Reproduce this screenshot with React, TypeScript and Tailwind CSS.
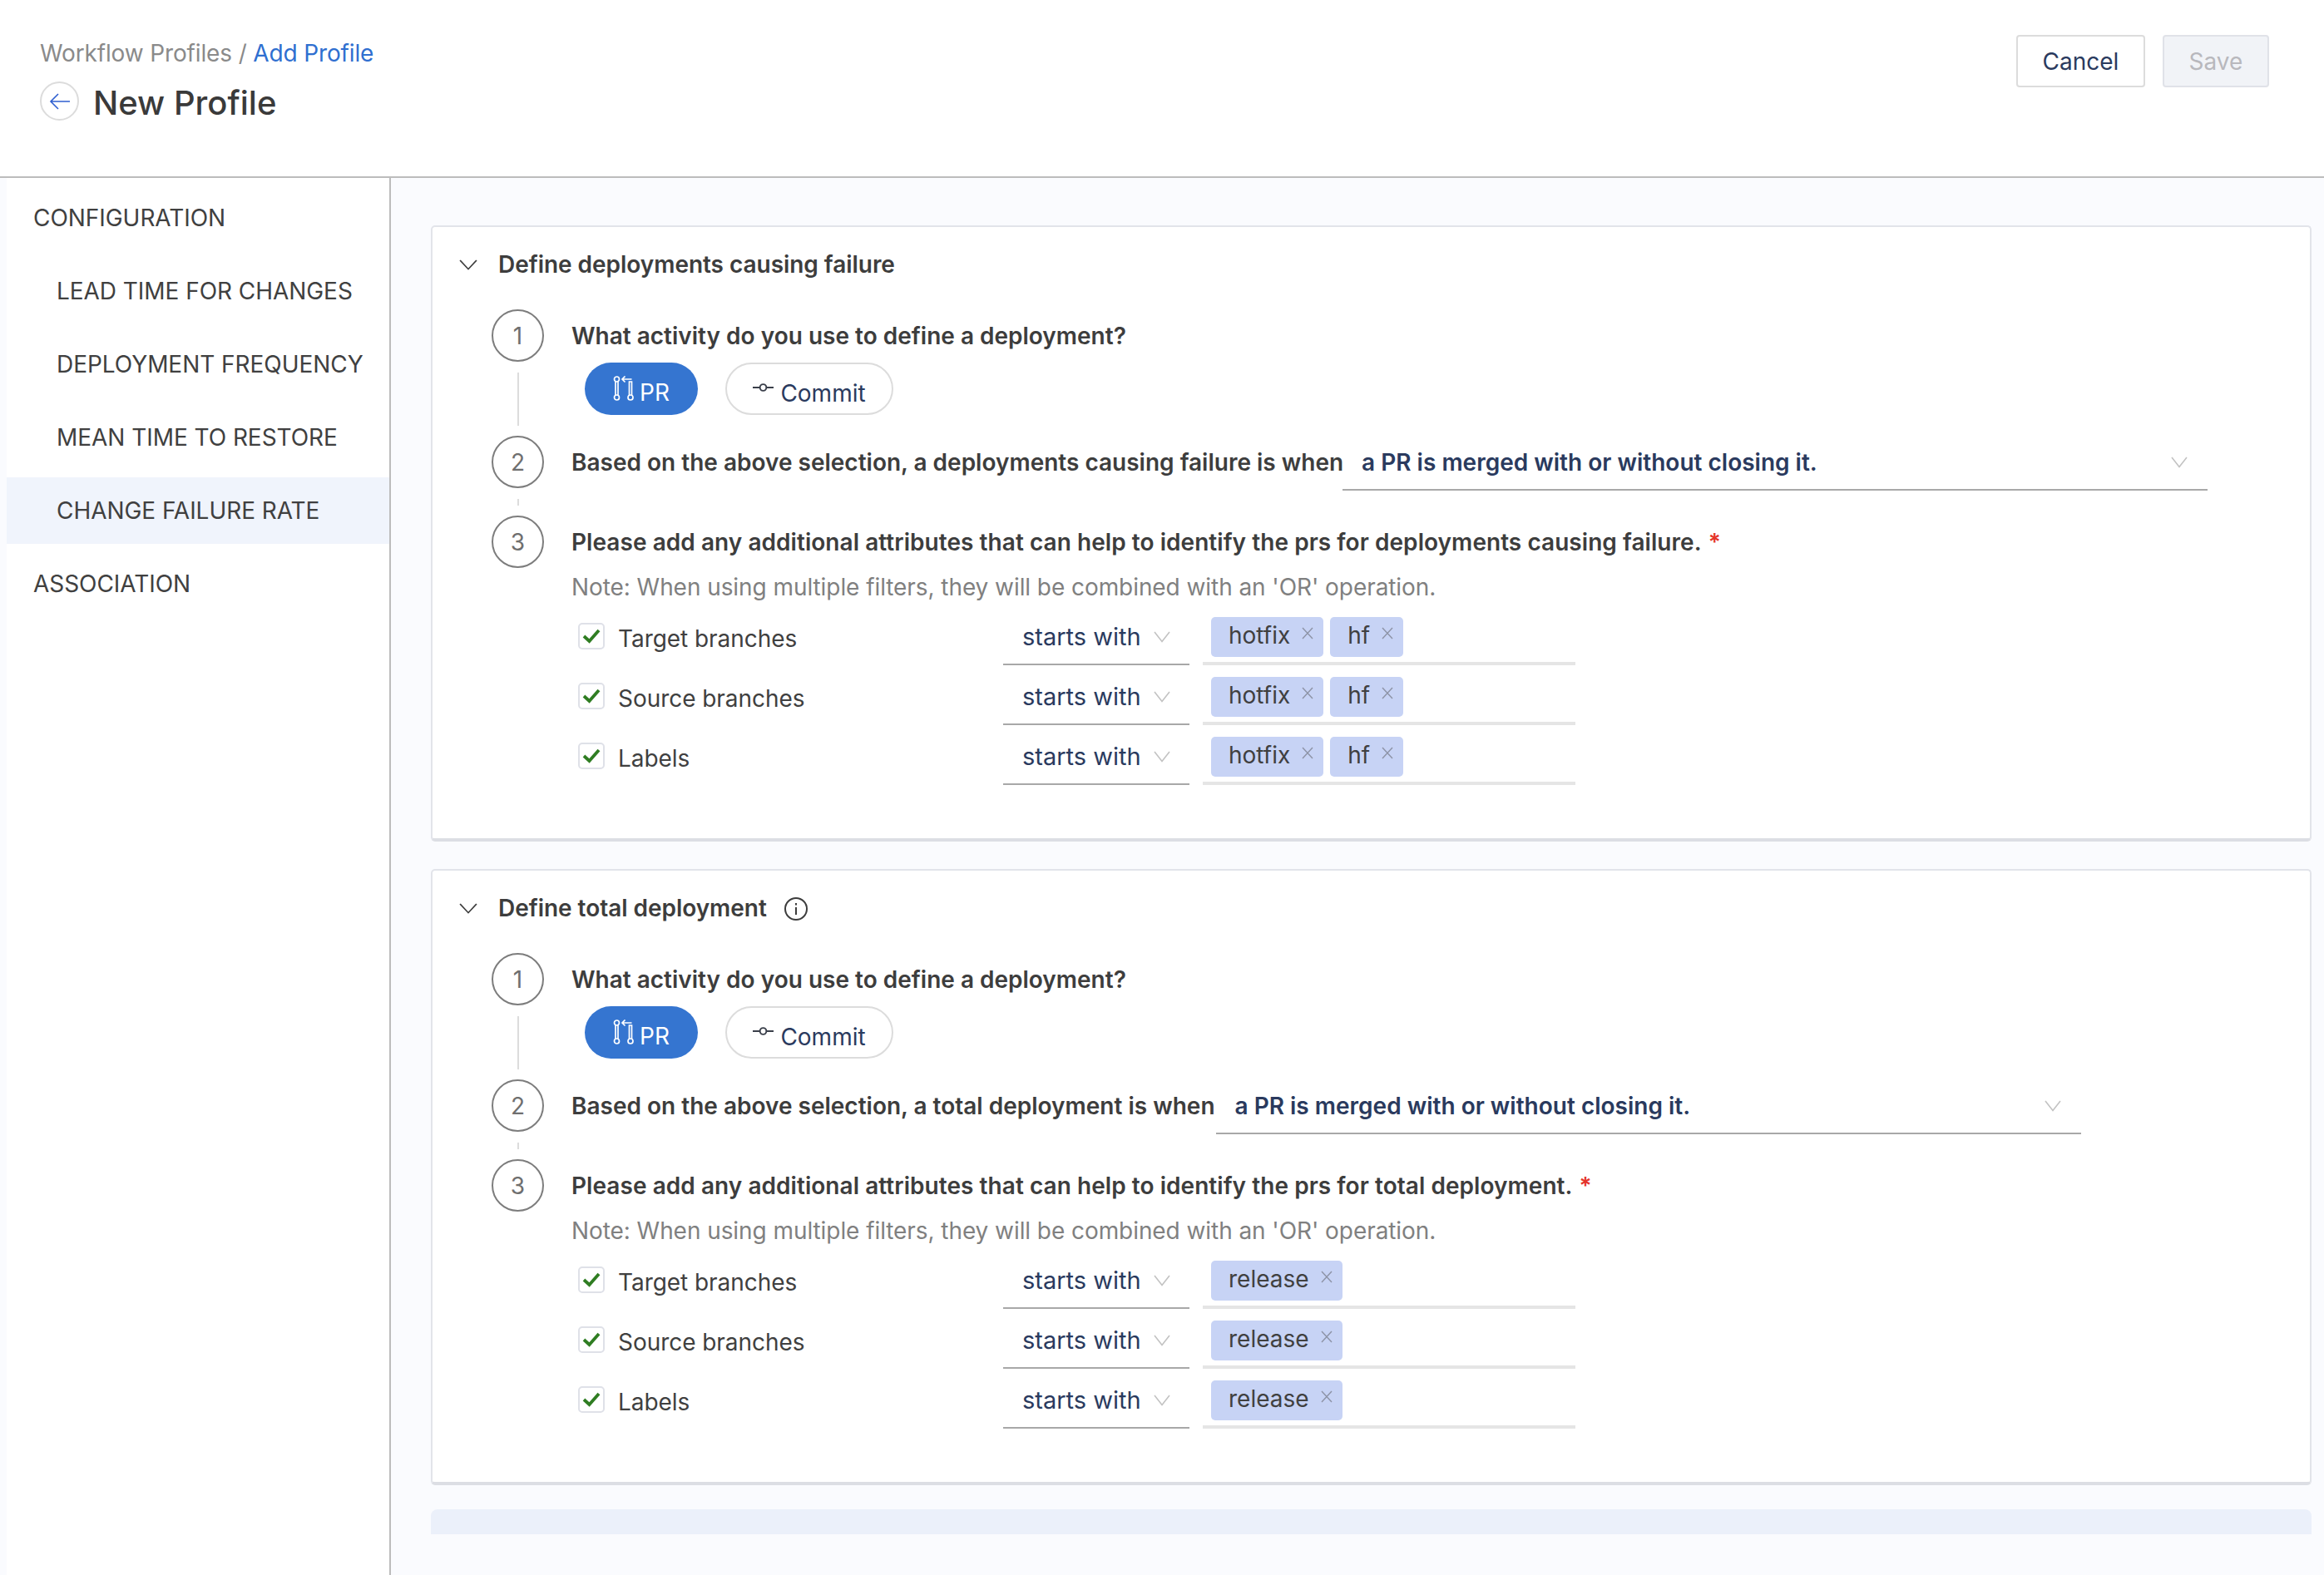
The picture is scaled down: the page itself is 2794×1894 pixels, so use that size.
import React from "react";

const Chevron = ({ className }: { className: string }) => (
  <svg className={className} viewBox="0 0 20 14" fill="none" stroke="currentColor" strokeWidth="1.6" preserveAspectRatio="none">
    <polyline points="1,1 10,12.5 19,1" />
  </svg>
);

const Cross = () => (
  <svg className="w-[14px] h-[15px] text-[#8d93a6]" viewBox="0 0 14 15" fill="none" stroke="currentColor" strokeWidth="1.4">
    <path d="M1 1 L13 14 M13 1 L1 14" />
  </svg>
);

const PrIcon = () => (
  <svg className="w-[26px] h-[30px] shrink-0 -mt-[2px]" viewBox="0 0 26 30" fill="none" stroke="#fff" strokeWidth="1.7">
    <circle cx="4.5" cy="4" r="3" />
    <circle cx="4.5" cy="26" r="3" />
    <circle cx="21" cy="26" r="3" />
    <path d="M3 7 V23 M6 7 V23" />
    <path d="M19.5 23 V7 H22.5 V23 M22.5 4 H11 M14.5 0.5 L11 4 L14.5 7.5" />
  </svg>
);

const CommitIcon = () => (
  <svg className="w-[25px] h-[14px] shrink-0" viewBox="0 0 26 14" fill="none" stroke="#3a3f4a" strokeWidth="2">
    <circle cx="13" cy="7" r="4" />
    <path d="M0 7 H9 M17 7 H26" />
  </svg>
);

const Circle = ({ n }: { n: number }) => (
  <div className="w-[63px] h-[63px] rounded-full border-2 border-[#7d7d7d] flex items-center justify-center text-[28px] text-[#6f6f6f] shrink-0">
    {n}
  </div>
);

const Check = () => (
  <div className="w-[32px] h-[32px] rounded-[5px] border-2 border-[#dfe1e8] bg-white flex items-center justify-center">
    <svg className="w-[22px] h-[18px]" viewBox="0 0 22 18" fill="none" stroke="#2f7d22" strokeWidth="3.8">
      <polyline points="2,9 8.5,15 20,2" />
    </svg>
  </div>
);

const Tag = ({ label }: { label: string }) => (
  <div className="h-[48px] rounded-[5px] bg-[#c7d3f5] flex items-start pt-[3px] pl-[21px] pr-[12px] gap-[14px] text-[28px] text-[#404040]">
    <span className="leading-[38px]">{label}</span>
    <span className="mt-[9px]"><Cross /></span>
  </div>
);

const FilterRow = ({ label, tags }: { label: string; tags: string[] }) => (
  <div className="flex h-[72px]">
    <div className="w-[511px] flex items-start pt-[21px] shrink-0">
      <Check />
      <span className="ml-[16px] mt-[1px] text-[28px] text-[#404040] leading-[36px] tracking-[-0.05px]">{label}</span>
    </div>
    <div className="w-[224px] h-[72px] border-b-2 border-[#a8a8a8] flex items-center pl-[23px] pt-[5px] shrink-0">
      <span className="text-[29px] text-[#2a3a5e]">starts with</span>
      <Chevron className="w-[20px] h-[14px] ml-[15px] text-[#c2c2c2]" />
    </div>
    <div className="w-[448px] h-[72px] ml-[16px] border-b-4 border-[#e5e5e5] flex gap-[8px] pl-[10px] pt-[14px] shrink-0">
      {tags.map((t) => (
        <Tag key={t} label={t} />
      ))}
    </div>
  </div>
);

const Card = ({
  title,
  info,
  what,
  selectClass,
  tags,
}: {
  title: string;
  info?: boolean;
  what: string;
  selectClass: string;
  tags: string[];
}) => (
  <section className="h-[741px] bg-white border-x-2 border-t-2 border-b-4 border-x-[#e2e4ea] border-t-[#e2e4ea] border-b-[#dcdee4] rounded-[5px]">
    <div className="flex items-center h-[36px] mt-[27px] pl-[32px]">
      <Chevron className="w-[22px] h-[13px] text-[#3d3d3d]" />
      <h2 className="ml-[25px] text-[28px] font-semibold text-[#3d3d3d] tracking-[-0.04px]">{title}</h2>
      {info && (
        <svg className="ml-[21px] mt-[1px] w-[28px] h-[28px]" viewBox="0 0 28 28" fill="none" stroke="#3d3d3d" strokeWidth="2">
          <circle cx="14" cy="14" r="13" />
          <path d="M14 12 V21 M14 7 V9.5" />
        </svg>
      )}
    </div>
    <div className="mt-[36px] pl-[71px]">
      <div className="flex h-[152px] gap-[33px]">
        <div className="w-[63px] flex flex-col items-center">
          <Circle n={1} />
          <div className="w-[2px] h-[64px] mt-[13px] bg-[#dcdcdc]" />
        </div>
        <div>
          <div className="h-[63px] flex items-center text-[28px] font-semibold text-[#3d3d3d]">
            What activity do you use to define a deployment?
          </div>
          <div className="flex gap-[33px] ml-[16px] mt-[1px]">
            <div className="w-[136px] h-[63px] rounded-full bg-[#3575d0] flex items-center justify-center gap-[6px] text-[28px] text-white">
              <PrIcon />
              <span className="mt-[9px]">PR</span>
            </div>
            <div className="w-[202px] h-[63px] rounded-full border-2 border-[#dcdcdc] bg-white flex items-center justify-center gap-[8px] text-[28px] text-[#2a3a5e]">
              <span className="-mt-[3px] flex"><CommitIcon /></span>
              <span className="mt-[10px]">Commit</span>
            </div>
          </div>
        </div>
      </div>
      <div className="flex h-[96px] gap-[33px]">
        <div className="w-[63px] flex flex-col items-center">
          <Circle n={2} />
          <div className="w-[2px] h-[8px] mt-[13px] bg-[#dcdcdc]" />
        </div>
        <div className="flex items-start">
          <div className="h-[63px] flex items-center text-[28px] font-semibold text-[#3d3d3d] whitespace-nowrap">{what}</div>
          <div className={`${selectClass} w-[1040px] h-[66px] border-b-2 border-[#a8a8a8] flex items-center justify-between pl-[23px] pr-[24px] text-[28px] font-semibold text-[#2a3a5e]`}>
            <span>a PR is merged with or without closing it.</span>
            <Chevron className="w-[20px] h-[14px] text-[#c2c2c2]" />
          </div>
        </div>
      </div>
      <div className="flex gap-[33px]">
        <div className="w-[63px]">
          <Circle n={3} />
        </div>
        <div>
          <div className="h-[63px] flex items-center text-[28px] font-semibold text-[#3d3d3d] whitespace-nowrap tracking-[0.05px]">
            {title === "Define deployments causing failure"
              ? "Please add any additional attributes that can help to identify the prs for deployments causing failure."
              : "Please add any additional attributes that can help to identify the prs for total deployment."}
            <span className="ml-[8px] text-[#e5352b]">*</span>
          </div>
          <div className="h-[32px] mt-[7px] flex items-center text-[28px] text-[#808080] tracking-[-0.07px]">
            Note: When using multiple filters, they will be combined with an 'OR' operation.
          </div>
          <div className="mt-[6px] ml-[8px]">
            <FilterRow label="Target branches" tags={tags} />
            <FilterRow label="Source branches" tags={tags} />
            <FilterRow label="Labels" tags={tags} />
          </div>
        </div>
      </div>
    </div>
  </section>
);

const NavItem = ({ label, sub, active }: { label: string; sub?: boolean; active?: boolean }) => (
  <div
    className={`h-[80px] flex items-center text-[28px] text-[#404040] whitespace-nowrap tracking-[-0.05px] ${sub ? "pl-[60px]" : "pl-[40px]"} ${
      active ? "bg-[#f0f4fc]" : ""
    }`}
  >
    {label}
  </div>
);

export default function App() {
  return (
    <div className="w-[2794px] h-[1894px] overflow-hidden bg-white text-[28px] flex flex-col font-['Inter','Liberation_Sans',sans-serif]">
      <header className="h-[214px] shrink-0 border-b-2 border-[#bcbcbc] flex justify-between pl-[48px] pr-[66px] pt-[42px]">
        <div>
          <div className="text-[28px] leading-[40px] text-[#8a8a8a] mt-[2px] tracking-[-0.14px]">
            Workflow Profiles / <span className="text-[#2f6fd0]">Add Profile</span>
          </div>
          <div className="flex items-center mt-[11px]">
            <div className="w-[47px] h-[47px] -mt-[1px] rounded-full border-2 border-[#dcdcdc] flex items-center justify-center">
              <svg className="w-[26px] h-[20px]" viewBox="0 0 26 20" fill="none" stroke="#2f5fd0" strokeWidth="1.6">
                <path d="M25 10 H2 M11 1 L2 10 L11 19" />
              </svg>
            </div>
            <h1 className="ml-[17px] mt-[4px] text-[40px] font-medium text-[#3a3a3a] leading-[50px]">New Profile</h1>
          </div>
        </div>
        <div className="flex gap-[21px] items-start">
          <button className="w-[155px] h-[63px] rounded-[4px] border-2 border-[#dcdcdc] bg-white text-[28px] text-[#2a3a5e]">Cancel</button>
          <button className="w-[128px] h-[63px] rounded-[4px] border-2 border-[#e0e2e8] bg-[#f1f3f7] text-[28px] text-[#b8b8bd]">Save</button>
        </div>
      </header>
      <div className="flex flex-1 min-h-0">
        <nav className="w-[470px] shrink-0 bg-[#fafbfe] pl-[8px]">
          <div className="h-full bg-white border-r-2 border-[#bcbcbc] pt-[8px]">
            <div className="flex flex-col gap-[8px]">
              <div className="-ml-[8px]"><NavItem label="CONFIGURATION" /></div>
              <NavItem label="LEAD TIME FOR CHANGES" sub />
              <NavItem label="DEPLOYMENT FREQUENCY" sub />
              <NavItem label="MEAN TIME TO RESTORE" sub />
              <NavItem label="CHANGE FAILURE RATE" sub active />
              <div className="-ml-[8px]"><NavItem label="ASSOCIATION" /></div>
            </div>
          </div>
        </nav>
        <main className="flex-1 bg-[#fafbfe] pl-[48px] pr-[15px] pt-[57px] flex flex-col">
          <Card
            title="Define deployments causing failure"
            what="Based on the above selection, a deployments causing failure is when"
            selectClass="-ml-[1px]"
            tags={["hotfix", "hf"]}
          />
          <div className="h-[33px] shrink-0" />
          <Card
            title="Define total deployment"
            info
            what="Based on the above selection, a total deployment is when"
            selectClass="ml-[1px]"
            tags={["release"]}
          />
          <div className="h-[30px] mt-[29px] shrink-0 bg-[#ebf0fa] rounded-t-[8px]" />
        </main>
      </div>
    </div>
  );
}
